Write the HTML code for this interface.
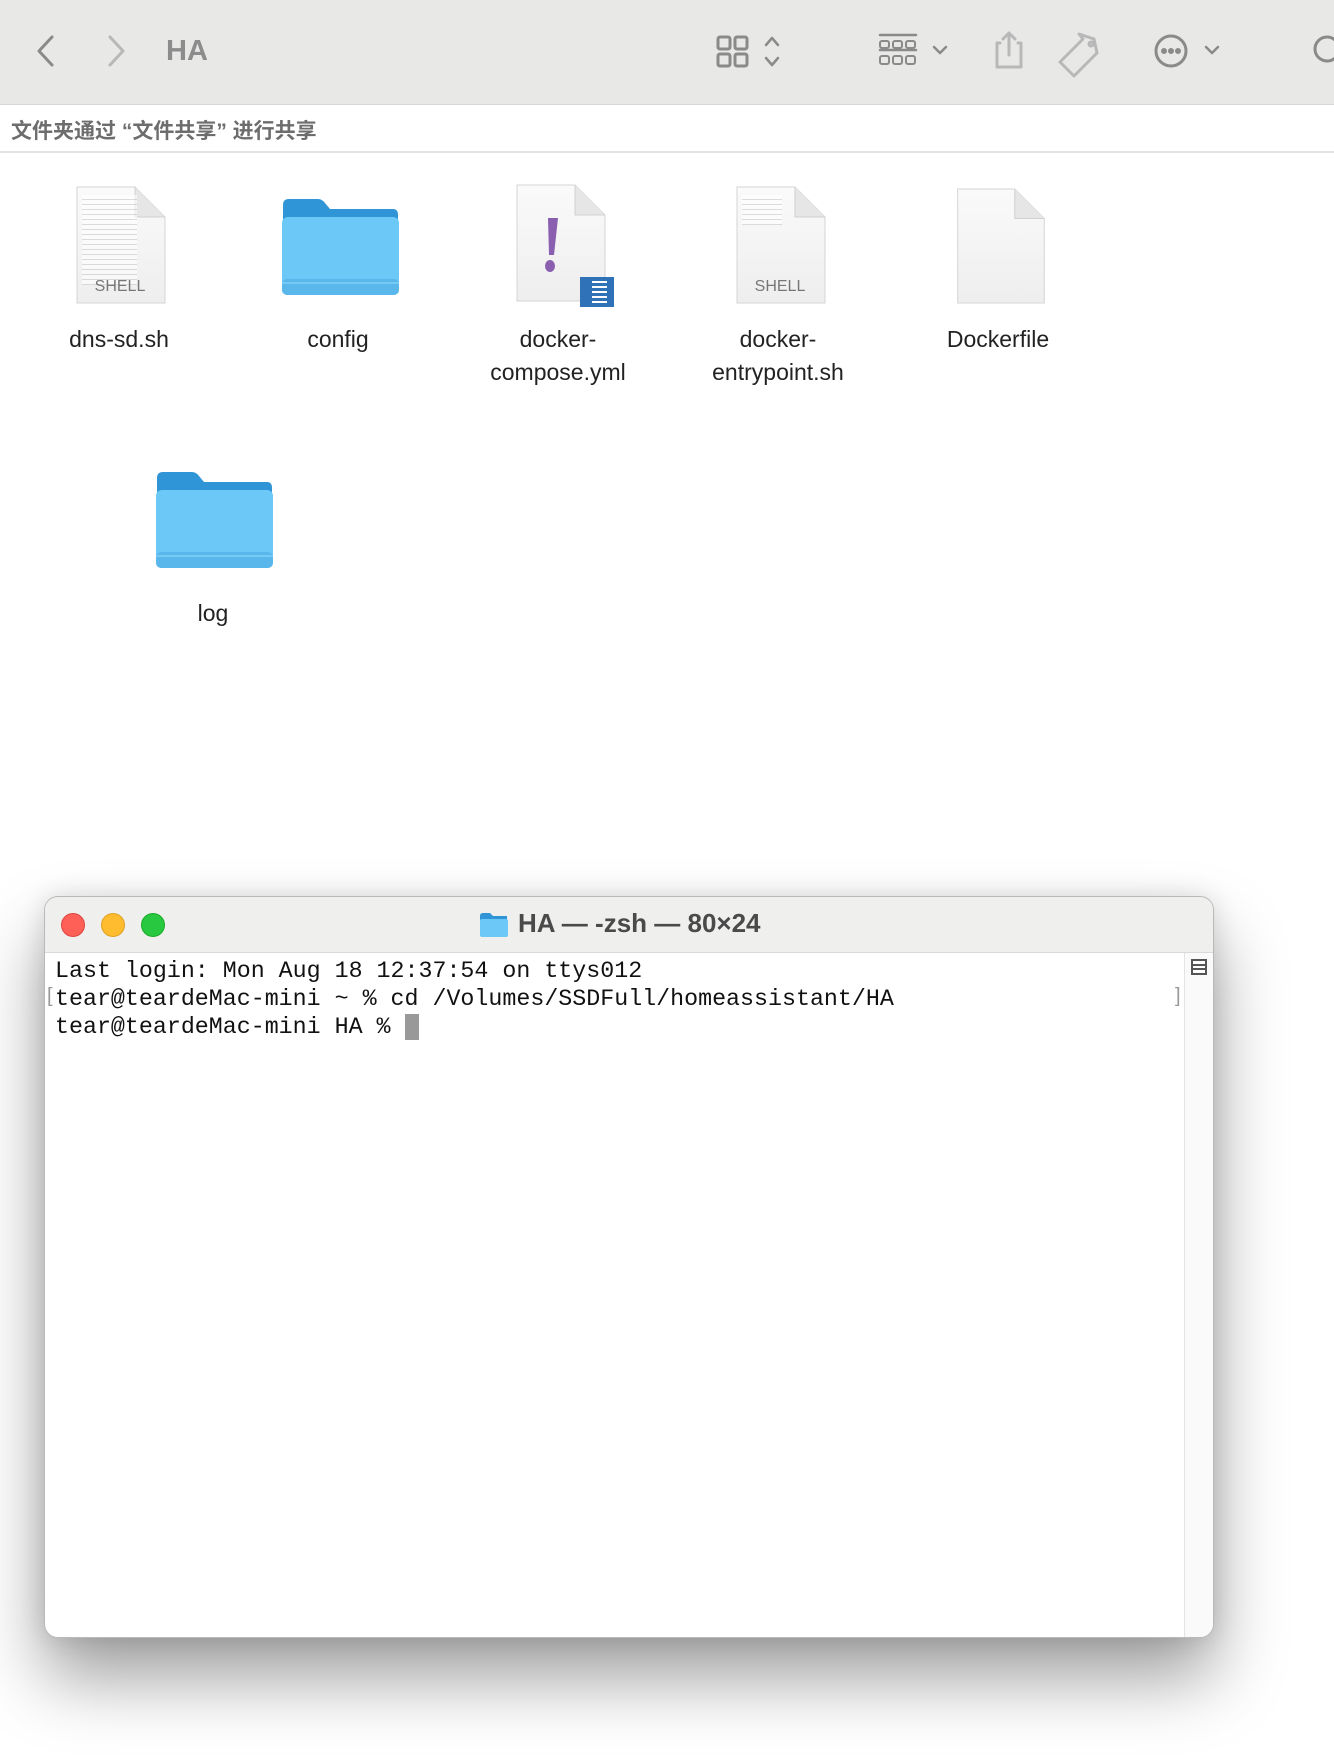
<!DOCTYPE html>
<html><head><meta charset="utf-8"><style>
*{margin:0;padding:0;box-sizing:border-box}
body{width:1334px;height:1760px;background:#fff;position:relative;overflow:hidden;font-family:"Liberation Sans","Noto Sans CJK SC",sans-serif}
.tb{position:absolute;left:0;top:0;width:1334px;height:105px;background:#e8e8e7;border-bottom:1px solid #d6d6d6}
.ab{position:absolute}
.lbl{position:absolute;width:200px;text-align:center;font-size:23px;color:#222;line-height:33px}
.share{position:absolute;left:0;top:105px;width:1334px;height:48px;border-bottom:2px solid #e2e2e2}
.term{position:absolute;left:44px;top:896px;width:1170px;height:742px;background:#fff;border-radius:14px;border:1px solid #b9b9b9;box-shadow:0 40px 70px rgba(0,0,0,.38),0 0 25px rgba(0,0,0,.12);overflow:hidden}
.tt{height:56px;background:#efefee;border-bottom:1px solid #d9d9d9;position:relative}
.dot{position:absolute;top:16px;width:24px;height:24px;border-radius:50%}
.mono{font-family:"Liberation Mono",monospace;font-size:23.3px;color:#111;line-height:28px;white-space:pre;position:absolute;left:10px;top:60px}
</style></head><body>
<div class="tb">
<svg class="ab" style="left:0;top:0" width="1334" height="105" fill="none" stroke="#8a8a8a" stroke-width="3" stroke-linecap="round" stroke-linejoin="round">
<path d="M52 37 L39 51 L52 65"/>
<path d="M110 37 L123 51 L110 65" stroke="#b8b8b8"/>
<rect x="718" y="37" width="12" height="12" rx="2"/><rect x="735" y="37" width="12" height="12" rx="2"/>
<rect x="718" y="54" width="12" height="12" rx="2"/><rect x="735" y="54" width="12" height="12" rx="2"/>
<path d="M766 45 L772 38 L778 45 M766 58 L772 65 L778 58" stroke-width="2.5"/>
<path d="M880 35 H916 M880 50 H916" stroke-width="2.5"/>
<rect x="880" y="41" width="9" height="7" rx="2" stroke-width="2"/><rect x="893" y="41" width="9" height="7" rx="2" stroke-width="2"/><rect x="906" y="41" width="9" height="7" rx="2" stroke-width="2"/>
<rect x="880" y="56" width="9" height="8" rx="2" stroke-width="2"/><rect x="893" y="56" width="9" height="8" rx="2" stroke-width="2"/><rect x="906" y="56" width="9" height="8" rx="2" stroke-width="2"/>
<path d="M934 47 L940 53 L946 47" stroke-width="2.5"/>
<g stroke="#b8b8b8"><path d="M1000 43 H997 V67 H1021 V43 H1018 M1009 55 V33 M1003 39 L1009 33 L1015 39"/>
<path d="M1087 34 L1102 39 L1105 53 L1082 76 L1068 62 L1091 39 Z" transform="translate(-8,0)"/><circle cx="1091" cy="44" r="2"/></g>
<circle cx="1171" cy="51" r="15"/>
<circle cx="1164" cy="51" r="1.5" fill="#8a8a8a"/><circle cx="1171" cy="51" r="1.5" fill="#8a8a8a"/><circle cx="1178" cy="51" r="1.5" fill="#8a8a8a"/>
<path d="M1206 47 L1212 53 L1218 47" stroke-width="2.5"/>
<circle cx="1327" cy="49" r="12"/>
</svg>
<div class="ab" style="left:166px;top:35px;font-size:29px;font-weight:bold;color:#8c8c8c">HA</div>
</div>
<div class="share"><div class="ab" style="left:11px;top:10px;font-size:21px;font-weight:bold;color:#6d6d6d">文件夹通过 “文件共享” 进行共享</div></div>

<svg width="0" height="0" style="position:absolute">
<defs>
<linearGradient id="pg" x1="0" y1="0" x2="0" y2="1"><stop offset="0" stop-color="#fafafa"/><stop offset="1" stop-color="#eeeeee"/></linearGradient>
<symbol id="doc" viewBox="0 0 94 122"><path d="M4 2 H62 L92 32 V118 H4 Z" fill="url(#pg)" stroke="#d4d4d4"/><path d="M62 2 V32 H92" fill="#e6e6e6" stroke="#d0d0d0"/></symbol>
<symbol id="fold" viewBox="0 0 120 100"><path d="M3 8 Q3 2 9 2 H38 Q42 2 45 6 L50 12 H113 Q118 12 118 18 V30 H3 Z" fill="#2f95d6"/><rect x="2" y="20" width="117" height="78" rx="6" fill="#6cc8f6"/><rect x="2" y="82" width="117" height="16" rx="5" fill="#5ab7ec"/><path d="M2 86 H119" stroke="#7dd1f8" stroke-width="1.5"/></symbol>
</defs></svg>

<svg class="ab" style="left:72px;top:185px" width="96" height="122"><use href="#doc"/></svg>
<div class="ab" style="left:82px;top:195px;width:55px;height:90px;background:repeating-linear-gradient(#fff 0 4px,#c8c8c8 4px 5px);opacity:.6"></div>
<div class="ab" style="left:72px;top:278px;width:96px;text-align:center;font-size:16px;color:#777">SHELL</div>
<div class="lbl" style="left:19px;top:323px">dns-sd.sh</div>

<svg class="ab" style="left:280px;top:197px" width="120" height="100"><use href="#fold"/></svg>
<div class="lbl" style="left:238px;top:323px">config</div>

<svg class="ab" style="left:512px;top:183px" width="96" height="122"><use href="#doc"/></svg>
<svg class="ab" style="left:540px;top:215px" width="30" height="65"><path d="M8 3 H18 L14 40 H9 Z" fill="#8a5fb0"/><ellipse cx="10" cy="51" rx="5" ry="6" fill="#8a5fb0"/></svg>
<div class="ab" style="left:580px;top:277px;width:34px;height:30px;background:#2f72b8"></div>
<div class="ab" style="left:592px;top:281px;width:15px;height:22px;background:repeating-linear-gradient(#fff 0 2px,#2f72b8 2px 5px)"></div>
<div class="lbl" style="left:458px;top:323px;line-height:33px">docker-<br>compose.yml</div>

<svg class="ab" style="left:732px;top:185px" width="96" height="122"><use href="#doc"/></svg>
<div class="ab" style="left:742px;top:195px;width:40px;height:30px;background:repeating-linear-gradient(#fff 0 4px,#c8c8c8 4px 5px);opacity:.6"></div>
<div class="ab" style="left:732px;top:278px;width:96px;text-align:center;font-size:16px;color:#777">SHELL</div>
<div class="lbl" style="left:678px;top:323px">docker-<br>entrypoint.sh</div>

<svg class="ab" style="left:952px;top:187px" width="96" height="120"><use href="#doc"/></svg>
<div class="lbl" style="left:898px;top:323px">Dockerfile</div>

<svg class="ab" style="left:154px;top:470px" width="120" height="100"><use href="#fold"/></svg>
<div class="lbl" style="left:113px;top:597px">log</div>

<div class="term">
<div class="tt">
<div class="dot" style="left:16px;background:#fe5f57;border:1px solid #e0443e"></div>
<div class="dot" style="left:56px;background:#febc2e;border:1px solid #dea123"></div>
<div class="dot" style="left:96px;background:#28c840;border:1px solid #1aab29"></div>
<svg class="ab" style="left:434px;top:15px" width="30" height="26"><path d="M1 4 Q1 1 4 1 H11 L14 4 H28 V24 H1Z" fill="#2f95d6"/><rect x="1" y="7" width="28" height="18" rx="2" fill="#6cc8f6"/></svg>
<div class="ab" style="left:473px;top:11px;font-size:26px;font-weight:bold;color:#4a4a4a">HA — -zsh — 80×24</div>
</div>
<div style="position:absolute;right:0;top:56px;width:29px;height:686px;background:#fafafa;border-left:1px solid #e4e4e4"></div>
<div style="position:absolute;right:6px;top:62px;width:16px;height:16px;border:2px solid #555;background:linear-gradient(#fff 0 3px,#555 3px 5px,#fff 5px 7px,#555 7px 9px,#fff 9px)"></div>
<div class="mono">Last login: Mon Aug 18 12:37:54 on ttys012
tear@teardeMac-mini ~ % cd /Volumes/SSDFull/homeassistant/HA
tear@teardeMac-mini HA % <span style="background:#999">&nbsp;</span></div>
<div class="ab" style="left:2px;top:88px;color:#999;font-size:20px">[</div>
<div class="ab" style="left:1130px;top:88px;color:#999;font-size:20px">]</div>
</div>
</body></html>
